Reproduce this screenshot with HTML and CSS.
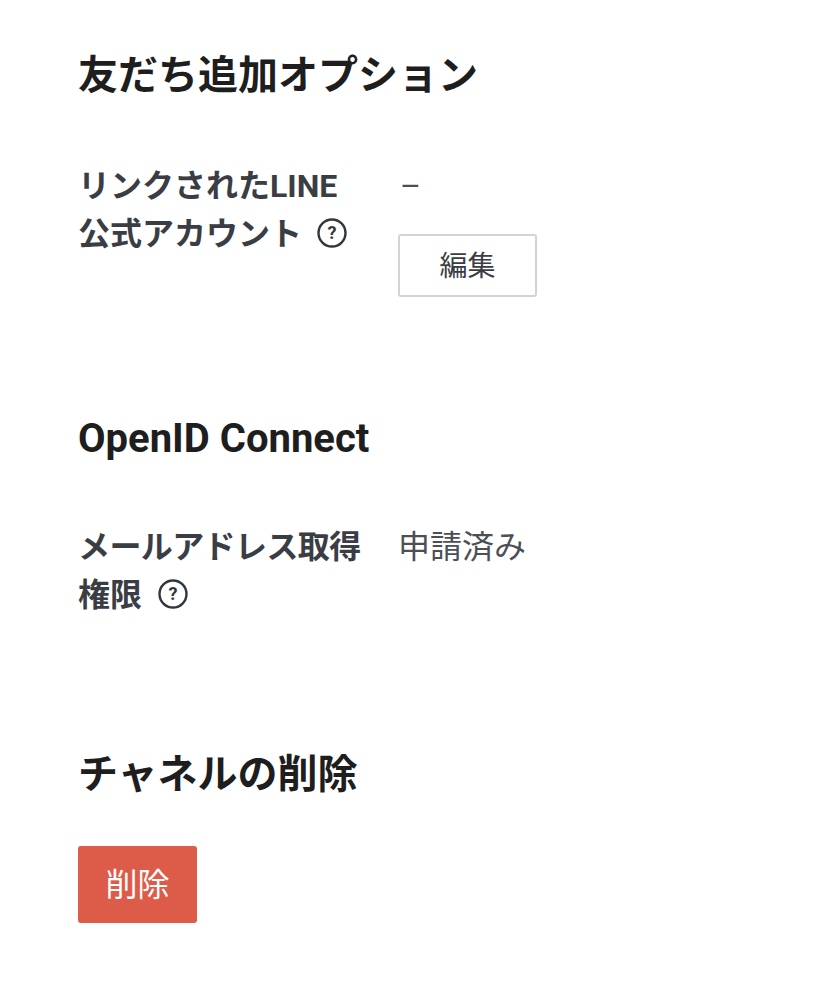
FILE: index.html
```html
<!DOCTYPE html>
<html lang="ja">
<head>
    <meta charset="UTF-8">
    <title>チャネル設定</title>
    <link rel="stylesheet" href="styles.css">
</head>
<body>

    <!-- Add friend options -->
    <section class="section section-friend">
        <h2>友だち追加オプション</h2>
        <div class="row">
            <div class="label">
                リンクされたLINE<br>公式アカウント
                <svg class="help help-first" viewBox="0 0 30 30"><circle cx="15" cy="15" r="13.5"/><text x="15" y="21" text-anchor="middle">?</text></svg>
            </div>
            <div class="value">
                <div class="dash">–</div>
                <button class="btn-edit">編集</button>
            </div>
        </div>
    </section>

    <!-- OpenID Connect -->
    <section class="section section-openid">
        <h2>OpenID Connect</h2>
        <div class="row">
            <div class="label">
                <span class="tight">メールアドレス取得</span><br>権限
                <svg class="help" viewBox="0 0 30 30"><circle cx="15" cy="15" r="13.5"/><text x="15" y="21" text-anchor="middle">?</text></svg>
            </div>
            <div class="value">申請済み</div>
        </div>
    </section>

    <!-- Delete channel -->
    <section class="section section-delete">
        <h2>チャネルの削除</h2>
        <button class="btn-delete">削除</button>
    </section>

</body>
</html>
```

FILE: styles.css
```css
body {
    margin: 0;
    padding: 0 78px;
    background: #fff;
    font-family: Roboto, "Noto Sans CJK JP", sans-serif;
}

h2 {
    margin: 0;
    font-size: 40px;
    line-height: 48px;
    font-weight: 700;
    color: #1e1e1e;
}

.section-friend {
    padding-top: 52px;
}

.section-openid {
    margin-top: 118px;
}

.section-delete {
    margin-top: 132px;
}

.row {
    display: flex;
    margin-top: 62px;
}

.section-openid .row {
    margin-top: 60px;
}

.label {
    width: 320px;
    font-size: 32px;
    line-height: 48px;
    font-weight: 700;
    color: #3a3d44;
}

.tight {
    letter-spacing: -0.6px;
}

.value {
    font-size: 32px;
    line-height: 48px;
    color: #4c4f56;
}

.dash {
    height: 48px;
    padding-left: 2px;
}

.help {
    width: 30px;
    height: 30px;
    margin-left: 8px;
    vertical-align: -3px;
}

.help-first {
    margin-left: 7px;
}

.help circle {
    fill: none;
    stroke: #33363c;
    stroke-width: 2.4;
}

.help text {
    font-size: 18px;
    font-weight: 700;
    fill: #33363c;
}

button {
    font-family: inherit;
    cursor: pointer;
}

.btn-edit {
    display: block;
    width: 139px;
    height: 63px;
    margin-top: 24px;
    padding: 0 0 4px;
    background: #fff;
    border: 2px solid #d0d4da;
    border-radius: 3px;
    font-size: 28px;
    color: #3a3d44;
}

.btn-delete {
    display: block;
    width: 119px;
    height: 77px;
    margin-top: 47px;
    padding: 0 0 5px;
    background: #dd5b49;
    border: 0;
    border-radius: 3px;
    font-size: 32px;
    color: #fff;
}
```
